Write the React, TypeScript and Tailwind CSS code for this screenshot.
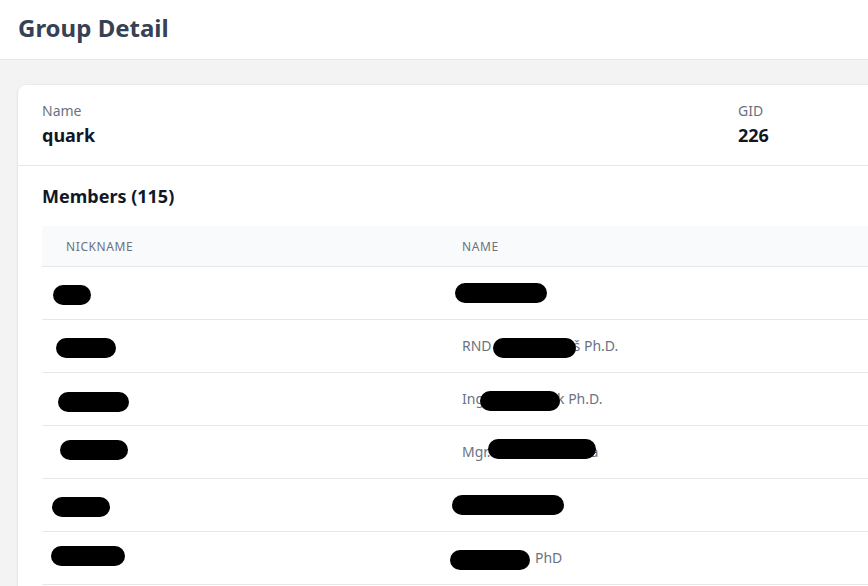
import React from "react";

type Pill = { ml: number; w: number; dy: number };

type Member = {
  nick: Pill;
  prefix?: string;
  name: Pill;
  suffix?: string;
  suffixMl?: number;
};

const members: Member[] = [
  { nick: { ml: -13, w: 38, dy: 2 }, name: { ml: -7, w: 92, dy: 0 } },
  { nick: { ml: -10, w: 60, dy: 2 }, prefix: "RND", name: { ml: 1, w: 83, dy: 2 }, suffix: "š Ph.D.", suffixMl: -2 },
  { nick: { ml: -8, w: 71, dy: 3 }, prefix: "Ing", name: { ml: -4, w: 80, dy: 2 }, suffix: "k Ph.D.", suffixMl: -3 },
  { nick: { ml: -6, w: 68, dy: -2 }, prefix: "Mgr.", name: { ml: -3, w: 108, dy: -3 }, suffix: "a", suffixMl: -5 },
  { nick: { ml: -14, w: 58, dy: 2 }, name: { ml: -10, w: 112, dy: 0 } },
  { nick: { ml: -15, w: 74, dy: -2 }, name: { ml: -12, w: 80, dy: 2 }, suffix: "PhD", suffixMl: 5 },
  { nick: { ml: -12, w: 64, dy: 0 }, name: { ml: -8, w: 96, dy: 0 } },
];

function Redacted({ pill }: { pill: Pill }) {
  return (
    <span
      className="relative z-10 inline-block h-5 rounded-full bg-black align-middle"
      style={{ marginLeft: pill.ml, width: pill.w, top: pill.dy }}
    />
  );
}

export default function App() {
  return (
    <div
      className="h-[586px] w-[868px] overflow-hidden bg-[#f3f3f3]"
      style={{ fontFamily: '"Noto Sans", "Open Sans", sans-serif' }}
    >
      <header className="flex h-[60px] w-[1476px] items-center border-b border-gray-200 bg-white px-[18px] pb-1">
        <h1 className="text-2xl font-bold text-gray-700">Group Detail</h1>
      </header>

      <main className="w-[1476px] px-[18px] pt-[25px]">
        <div className="rounded-lg bg-white shadow-sm ring-1 ring-gray-200/60">
          <div className="grid grid-cols-2 border-b border-gray-200 px-6 py-4">
            <div>
              <p className="text-sm text-gray-500">Name</p>
              <p className="text-lg font-bold text-gray-900">quark</p>
            </div>
            <div>
              <p className="text-sm text-gray-500">GID</p>
              <p className="text-lg font-bold text-gray-900">226</p>
            </div>
          </div>

          <div className="px-6 pt-4">
            <h2 className="mb-4 text-lg font-bold text-gray-900">Members (115)</h2>

            <div className="grid grid-cols-[396px_1fr] border-b border-gray-200 bg-gray-50 text-xs uppercase tracking-wider text-gray-500">
              <div className="px-6 pb-[11px] pt-[13px]">Nickname</div>
              <div className="px-6 pb-[11px] pt-[13px]">Name</div>
            </div>

            {members.map((m, i) => (
              <div
                key={i}
                className="grid grid-cols-[396px_1fr] border-b border-gray-200 text-sm text-gray-500"
              >
                <div className="flex h-[52px] items-center px-6">
                  <Redacted pill={m.nick} />
                </div>
                <div className="flex h-[52px] items-center whitespace-pre px-6">
                  {m.prefix && <span>{m.prefix}</span>}
                  <Redacted pill={m.name} />
                  {m.suffix && <span style={{ marginLeft: m.suffixMl }}>{m.suffix}</span>}
                </div>
              </div>
            ))}
          </div>
        </div>
      </main>
    </div>
  );
}
